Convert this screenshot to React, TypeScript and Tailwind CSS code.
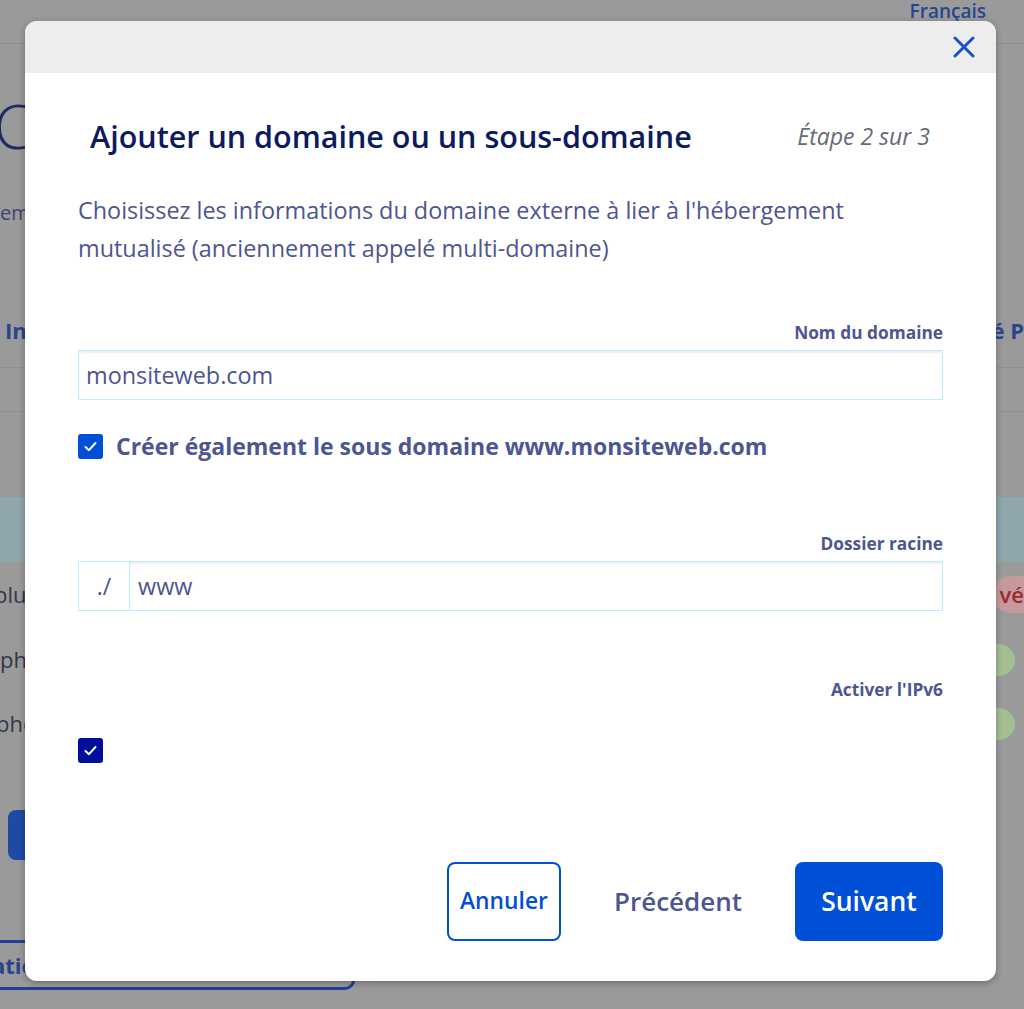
import { useState } from 'react';

function CheckBox({ checked, onChange, dark }: { checked: boolean; onChange: () => void; dark?: boolean }) {
  return (
    <button
      type="button"
      onClick={onChange}
      className={`flex h-[25px] w-[25px] shrink-0 items-center justify-center rounded-[3px] ${
        dark ? 'bg-[#000e9c]' : 'bg-[#0050d7]'
      }`}
    >
      {checked && (
        <svg width="15" height="15" viewBox="0 0 15 15" fill="none">
          <path d="M2.5 8 L6 11.2 L12.5 4" stroke="white" strokeWidth="2" strokeLinecap="round" strokeLinejoin="round" />
        </svg>
      )}
    </button>
  );
}

function BackgroundPage() {
  // page sitting behind the dimmed overlay, mostly hidden by the modal
  return (
    <div className="flex flex-col text-[#2a3f86]">
      <div className="flex h-[44px] items-start justify-end border-b border-[#8e8e8e] pr-[38px]">
        <span className="text-[19px] font-semibold leading-[22px] text-[#27458f]">Français</span>
      </div>
      <div className="mt-[52px] -ml-[6px] text-[60px] font-light leading-[60px] text-[#1e2a63]">Configuration</div>
      <div className="mt-[45px] text-[20px] leading-[24px] text-[#3c4470]">emplacement</div>
      <div className="mt-[85px] flex h-[58px] items-start justify-between border-b border-[#8f8f8f] pl-[5px]">
        <span className="text-[22px] font-bold leading-[40px] text-[#27458f]">Informations</span>
        <span className="text-[22px] font-bold leading-[40px] text-[#27458f]">é P</span>
      </div>
      <div className="h-[44px] border-b border-[#909090]" />
      <div className="mt-[85px] h-[65px] bg-[#8fa6ad]" />
      <div className="flex h-[66px] items-center justify-between border-b border-[#8f9ea3]">
        <span className="-ml-[6px] text-[22px] text-[#33364a]">plus</span>
        <span className="rounded-l-full bg-[#c49a9c] py-[2px] pl-[8px] text-[22px] font-semibold text-[#9b2a33]">vé</span>
      </div>
      <div className="flex h-[64px] items-center justify-between border-b border-[#8f9ea3] pr-[9px]">
        <span className="text-[22px] text-[#33364a]">ph</span>
        <span className="flex h-[32px] w-[40px] items-center rounded-full bg-[#a3bf92] pl-[2px] text-[20px] text-[#3e6a35]">é</span>
      </div>
      <div className="flex h-[64px] items-center justify-between border-b border-[#8f9ea3] pr-[9px]">
        <span className="-ml-[4px] text-[22px] text-[#33364a]">phe</span>
        <span className="flex h-[32px] w-[40px] items-center rounded-full bg-[#a3bf92] pl-[2px] text-[20px] text-[#3e6a35]">é</span>
      </div>
      <div className="ml-[8px] mt-[54px] h-[50px] w-[160px] rounded-[8px] bg-[#1e4aa6]" />
      <div className="-ml-[8px] mt-[80px] flex h-[50px] w-[363px] items-center rounded-br-[10px] border-b-[3px] border-r-[3px] border-t-[3px] border-[#213f9a]">
        <span className="text-[22px] font-bold text-[#27458f]">ation</span>
      </div>
    </div>
  );
}

export default function App() {
  const [domain, setDomain] = useState('monsiteweb.com');
  const [folder, setFolder] = useState('www');
  const [www, setWww] = useState(true);
  const [ipv6, setIpv6] = useState(true);

  return (
    <div className="relative h-[1009px] w-full overflow-hidden bg-[#9a9a9a] font-['Open_Sans',sans-serif]">
      <BackgroundPage />

      {/* Modal */}
      <div className="absolute left-[25px] top-[21px] flex h-[960px] w-[971px] flex-col overflow-hidden rounded-[12px] bg-white shadow-[0_2px_6px_rgba(0,0,0,0.3)]">
        <div className="flex h-[52px] shrink-0 items-center justify-end bg-[#ededed] pr-[21px]">
          <button type="button" aria-label="Fermer">
            <svg width="22" height="22" viewBox="0 0 22 22" fill="none">
              <path d="M2 2 L20 20 M20 2 L2 20" stroke="#1a4fd0" strokeWidth="3" strokeLinecap="round" />
            </svg>
          </button>
        </div>

        <div className="flex flex-col px-[53px]">
          <div className="mt-[43px] flex h-[40px] items-center justify-between">
            <h2 className="pl-[12px] text-[30.5px] font-semibold leading-[40px] text-[#0c1a60]">
              Ajouter un domaine ou un sous-domaine
            </h2>
            <span className="pr-[13px] text-[23px] italic leading-[40px] text-[#666a75]">Étape 2 sur 3</span>
          </div>

          <p className="mt-[35px] text-[23.4px] leading-[38px] text-[#4d5592]">
            Choisissez les informations du domaine externe à lier à l'hébergement
            <br />
            mutualisé (anciennement appelé multi-domaine)
          </p>

          <label className="mt-[56px] text-right text-[17.3px] font-bold leading-[20px] text-[#4d5592]">Nom du domaine</label>
          <input
            value={domain}
            onChange={(e) => setDomain(e.target.value)}
            className="mt-[7px] h-[50px] w-full border border-[#bdeffb] px-[7px] text-[23.4px] text-[#4d5592] shadow-[inset_0_2px_2px_rgba(0,0,0,0.07)] outline-none"
          />

          <div className="mt-[34px] flex h-[25px] items-center gap-[13px]">
            <CheckBox checked={www} onChange={() => setWww(!www)} />
            <span className="text-[23px] font-bold leading-[25px] text-[#4d5592]">Créer également le sous domaine www.monsiteweb.com</span>
          </div>

          <label className="mt-[75px] text-right text-[17.3px] font-bold leading-[20px] text-[#4d5592]">Dossier racine</label>
          <div className="mt-[7px] flex h-[50px] w-full">
            <span className="flex w-[52px] shrink-0 items-center justify-center border border-[#bdeffb] text-[23px] text-[#4d5592]">./</span>
            <input
              value={folder}
              onChange={(e) => setFolder(e.target.value)}
              className="h-full flex-1 border border-l-0 border-[#bdeffb] px-[8px] text-[23.4px] text-[#4d5592] shadow-[inset_0_2px_2px_rgba(0,0,0,0.07)] outline-none"
            />
          </div>

          <label className="mt-[69px] text-right text-[17.3px] font-bold leading-[20px] text-[#4d5592]">Activer l'IPv6</label>
          <div className="mt-[38px] flex">
            <CheckBox checked={ipv6} onChange={() => setIpv6(!ipv6)} dark />
          </div>

          <div className="mt-[99px] flex h-[79px] items-stretch justify-end gap-[53px]">
            <button type="button" className="w-[114px] rounded-[8px] border-2 border-[#0050d7] text-[22.8px] font-semibold text-[#0050d7]">
              Annuler
            </button>
            <button type="button" className="text-[26px] font-semibold text-[#4d5592]">
              Précédent
            </button>
            <button type="button" className="w-[148px] rounded-[8px] bg-[#0050d7] text-[26.5px] font-semibold text-white">
              Suivant
            </button>
          </div>
        </div>
      </div>
    </div>
  );
}
